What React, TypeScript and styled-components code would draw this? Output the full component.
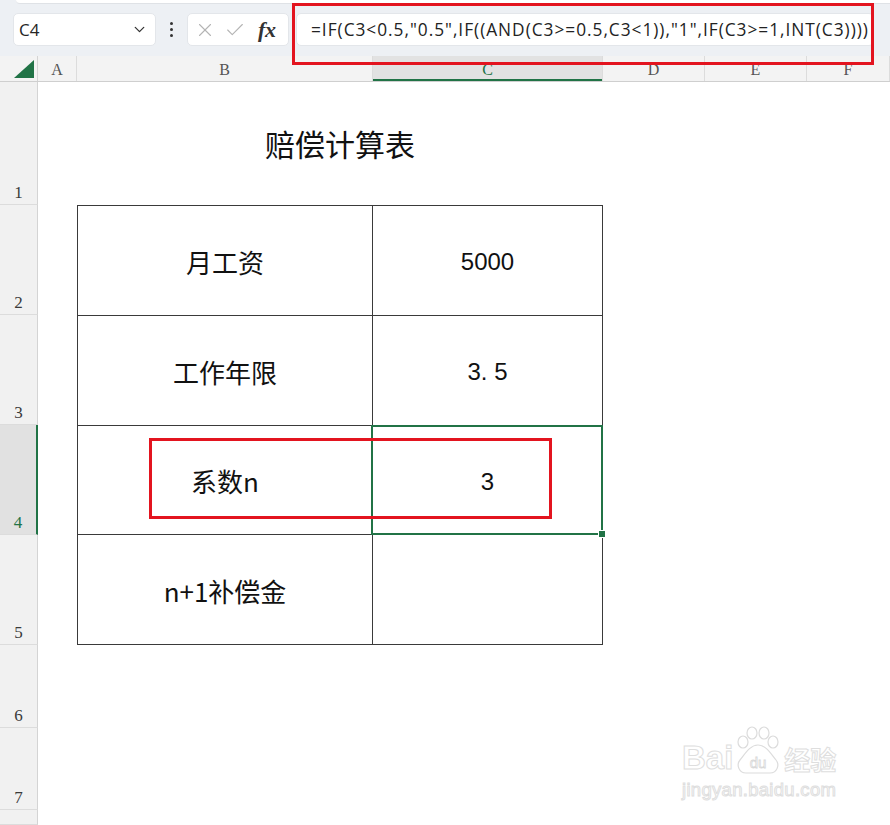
import React from "react";
import styled, { createGlobalStyle, css } from "styled-components";
import { ChevronDown, X, Check } from "lucide-react";

const GlobalStyle = createGlobalStyle`
  html, body { margin: 0; padding: 0; background: #fff; }
  body { font-family: "Noto Sans", "Noto Sans CJK SC", sans-serif; }
  * { box-sizing: border-box; }
`;

const COLS = "38px 39px 296px 230px 102px 102px 1fr";
const GREEN = "#217346";
const RED = "#e3141f";

const Page = styled.div`
  position: relative;
  width: 890px;
  height: 825px;
  overflow: hidden;
  background: #fff;
`;

const Toolbar = styled.div`
  height: 56px;
  background: #edf0f4;
  display: flex;
  align-items: flex-start;
  padding: 13px 0 0 13px;
  position: relative;
  &::before {
    content: "";
    position: absolute;
    left: 16px;
    right: 0;
    top: 0;
    height: 3px;
    background: #fff;
    border-bottom: 1px solid #dfe2e6;
    border-bottom-left-radius: 4px;
  }
`;

const Box = styled.div`
  height: 33px;
  background: #fff;
  border-radius: 5px;
  border: 1px solid #e3e6ea;
  display: flex;
  align-items: center;
`;

const NameBox = styled(Box)`
  width: 143px;
  padding: 0 7px 0 5px;
  justify-content: space-between;
  font-size: 17px;
  color: #262626;
  font-family: "Open Sans", "Noto Sans", sans-serif;
  svg { color: #333; }
`;

const Dots = styled.div`
  width: 31px;
  height: 33px;
  display: flex;
  flex-direction: column;
  align-items: center;
  justify-content: center;
  gap: 3px;
  span {
    width: 3px;
    height: 3px;
    border-radius: 50%;
    background: #333;
  }
`;

const FxBox = styled(Box)`
  width: 102px;
  padding: 0 5px 0 6px;
  gap: 8px;
  svg { color: #b4b4b4; }
`;

const Fx = styled.span`
  font-family: "Liberation Serif", serif;
  font-style: italic;
  font-weight: bold;
  font-size: 22px;
  color: #333;
  margin-left: 4px;
  letter-spacing: -0.3px;
`;

const FormulaBox = styled(Box)`
  margin-left: 7px;
  width: 578px;
  padding-left: 14px;
  font-family: "Open Sans", "Noto Sans", sans-serif;
  font-size: 17.3px;
  letter-spacing: 0.98px;
  color: #222;
  white-space: nowrap;
`;

const HeaderRow = styled.div`
  display: grid;
  grid-template-columns: ${COLS};
  height: 26px;
  background: #f3f3f3;
  border-bottom: 1px solid #cfcfcf;
`;

const Corner = styled.div`
  border-right: 1px solid #d4d4d4;
  display: flex;
  align-items: flex-end;
  justify-content: flex-end;
  padding: 0 3px 3px 0;
`;

const ColHeader = styled.div<{ $active?: boolean }>`
  display: flex;
  align-items: center;
  justify-content: center;
  font-family: "Liberation Serif", serif;
  font-size: 16px;
  color: #555;
  border-right: 1px solid #dcdcdc;
  padding-top: 2px;
  ${(p) =>
    p.$active &&
    css`
      background: #e2e2e2;
      color: ${GREEN};
      box-shadow: inset 0 -2px 0 ${GREEN};
    `}
`;

const Sheet = styled.div`
  display: grid;
  grid-template-columns: ${COLS};
  grid-template-rows: 123px 110px 110px 110px 110px 83px 82px 1fr;
  height: 743px;
`;

const RowHeader = styled.div<{ $row: number; $active?: boolean }>`
  grid-column: 1;
  grid-row: ${(p) => p.$row};
  background: #f1f1f1;
  border-right: 1px solid #d4d4d4;
  border-bottom: 1px solid #dcdcdc;
  display: flex;
  align-items: flex-end;
  justify-content: center;
  padding-bottom: 1px;
  font-family: "Liberation Serif", serif;
  font-size: 17px;
  color: #3a3a3a;
  ${(p) =>
    p.$active &&
    css`
      background: #e1e1e1;
      color: ${GREEN};
      border-right: 2px solid ${GREEN};
    `}
`;

const Title = styled.div`
  grid-column: 3 / 5;
  grid-row: 1;
  display: flex;
  align-items: center;
  justify-content: center;
  padding: 0 0 2px 0;
  font-family: "Noto Sans CJK SC", sans-serif;
  font-size: 30px;
  color: #111;
`;

const DataTable = styled.div`
  grid-column: 3 / 5;
  grid-row: 2 / 6;
  display: grid;
  grid-template-columns: 295px 230px;
  grid-template-rows: repeat(4, 1fr);
  border-top: 1px solid #3a3a3a;
  border-left: 1px solid #3a3a3a;
  width: 526px;
`;

const Cell = styled.div<{ $value?: boolean; $selected?: boolean }>`
  position: relative;
  border-right: 1px solid #3a3a3a;
  border-bottom: 1px solid #3a3a3a;
  display: flex;
  align-items: center;
  justify-content: center;
  color: #111;
  font-family: ${(p) =>
    p.$value
      ? `"Liberation Sans", "Noto Sans CJK SC", sans-serif`
      : `"Noto Sans CJK SC", sans-serif`};
  font-size: ${(p) => (p.$value ? "24px" : "26px")};
  padding-top: ${(p) => (p.$value ? "4px" : "2px")};
  ${(p) =>
    p.$selected &&
    css`
      &::after {
        content: "";
        position: absolute;
        left: -2px;
        top: -1px;
        right: -1px;
        bottom: -1px;
        border: 2px solid ${GREEN};
      }
      &::before {
        content: "";
        position: absolute;
        right: -4px;
        bottom: -4px;
        width: 6px;
        height: 6px;
        background: ${GREEN};
        border: 1px solid #fff;
        z-index: 2;
      }
    `}
`;

const RedBox = styled.div<{ $x: number; $y: number; $w: number; $h: number }>`
  position: absolute;
  left: ${(p) => p.$x}px;
  top: ${(p) => p.$y}px;
  width: ${(p) => p.$w}px;
  height: ${(p) => p.$h}px;
  border: 3px solid ${RED};
  pointer-events: none;
`;

const Watermark = styled.div`
  position: absolute;
  left: 682px;
  top: 726px;
  display: flex;
  flex-direction: column;
  align-items: flex-start;
  color: #fff;
  pointer-events: none;
`;

const MarkRow = styled.div`
  display: flex;
  align-items: flex-end;
`;

const OutlineText = styled.span<{ $size: number; $weight?: number }>`
  font-family: "Liberation Sans", "Noto Sans CJK SC", sans-serif;
  font-size: ${(p) => p.$size}px;
  font-weight: ${(p) => p.$weight ?? 400};
  color: #fff;
  -webkit-text-stroke: 1px #dedede;
  line-height: 1;
`;

const Paw = () => (
  <svg width="50" height="50" viewBox="0 0 50 50" style={{ margin: "0 1px -2px 0" }}>
    <g fill="#fff" stroke="#dcdcdc" strokeWidth="1.2">
      <ellipse cx="10" cy="16" rx="5" ry="6" />
      <ellipse cx="19" cy="7" rx="5" ry="6" />
      <ellipse cx="31" cy="7" rx="5" ry="6" />
      <ellipse cx="40" cy="16" rx="5" ry="6" />
      <path d="M25 19 C17 19 12 28 7 34 C3 39 6 47 13 47 L37 47 C44 47 47 39 43 34 C38 28 33 19 25 19 Z" />
    </g>
    <text
      x="25"
      y="42"
      textAnchor="middle"
      fontFamily="Liberation Sans, sans-serif"
      fontSize="15"
      fill="#fff"
      stroke="#d8d8d8"
      strokeWidth="0.8"
    >
      du
    </text>
  </svg>
);

const rowsMeta = [1, 2, 3, 4, 5, 6, 7, 8];
const cols = ["A", "B", "C", "D", "E", "F"];
const data: [string, string][] = [
  ["月工资", "5000"],
  ["工作年限", "3. 5"],
  ["系数n", "3"],
  ["n+1补偿金", ""],
];

export default function App() {
  return (
    <Page>
      <GlobalStyle />
      <Toolbar>
        <NameBox>
          <span>C4</span>
          <ChevronDown size={17} strokeWidth={1.8} />
        </NameBox>
        <Dots>
          <span />
          <span />
          <span />
        </Dots>
        <FxBox>
          <X size={22} strokeWidth={1.2} />
          <Check size={22} strokeWidth={1.2} />
          <Fx>fx</Fx>
        </FxBox>
        <FormulaBox>=IF(C3&lt;0.5,"0.5",IF((AND(C3&gt;=0.5,C3&lt;1)),"1",IF(C3&gt;=1,INT(C3))))</FormulaBox>
      </Toolbar>
      <HeaderRow>
        <Corner>
          <svg width="20" height="18" viewBox="0 0 20 18">
            <polygon points="20,0 20,18 0,18" fill={GREEN} />
          </svg>
        </Corner>
        {cols.map((c) => (
          <ColHeader key={c} $active={c === "C"}>
            {c}
          </ColHeader>
        ))}
      </HeaderRow>
      <Sheet>
        {rowsMeta.map((r) => (
          <RowHeader key={r} $row={r} $active={r === 4}>
            {r <= 7 ? r : ""}
          </RowHeader>
        ))}
        <Title>赔偿计算表</Title>
        <DataTable>
          {data.map(([label, value], i) => (
            <React.Fragment key={label}>
              <Cell>{label}</Cell>
              <Cell $value $selected={i === 2}>
                {value}
              </Cell>
            </React.Fragment>
          ))}
        </DataTable>
      </Sheet>
      <RedBox $x={292} $y={3} $w={582} $h={62} />
      <RedBox $x={149} $y={438} $w={403} $h={81} />
      <Watermark>
        <MarkRow>
          <OutlineText $size={33} $weight={700}>
            Bai
          </OutlineText>
          <Paw />
          <OutlineText $size={26} $weight={700}>
            经验
          </OutlineText>
        </MarkRow>
        <OutlineText $size={18.5} style={{ marginTop: 7, letterSpacing: "0.3px" }}>
          jingyan.baidu.com
        </OutlineText>
      </Watermark>
    </Page>
  );
}
